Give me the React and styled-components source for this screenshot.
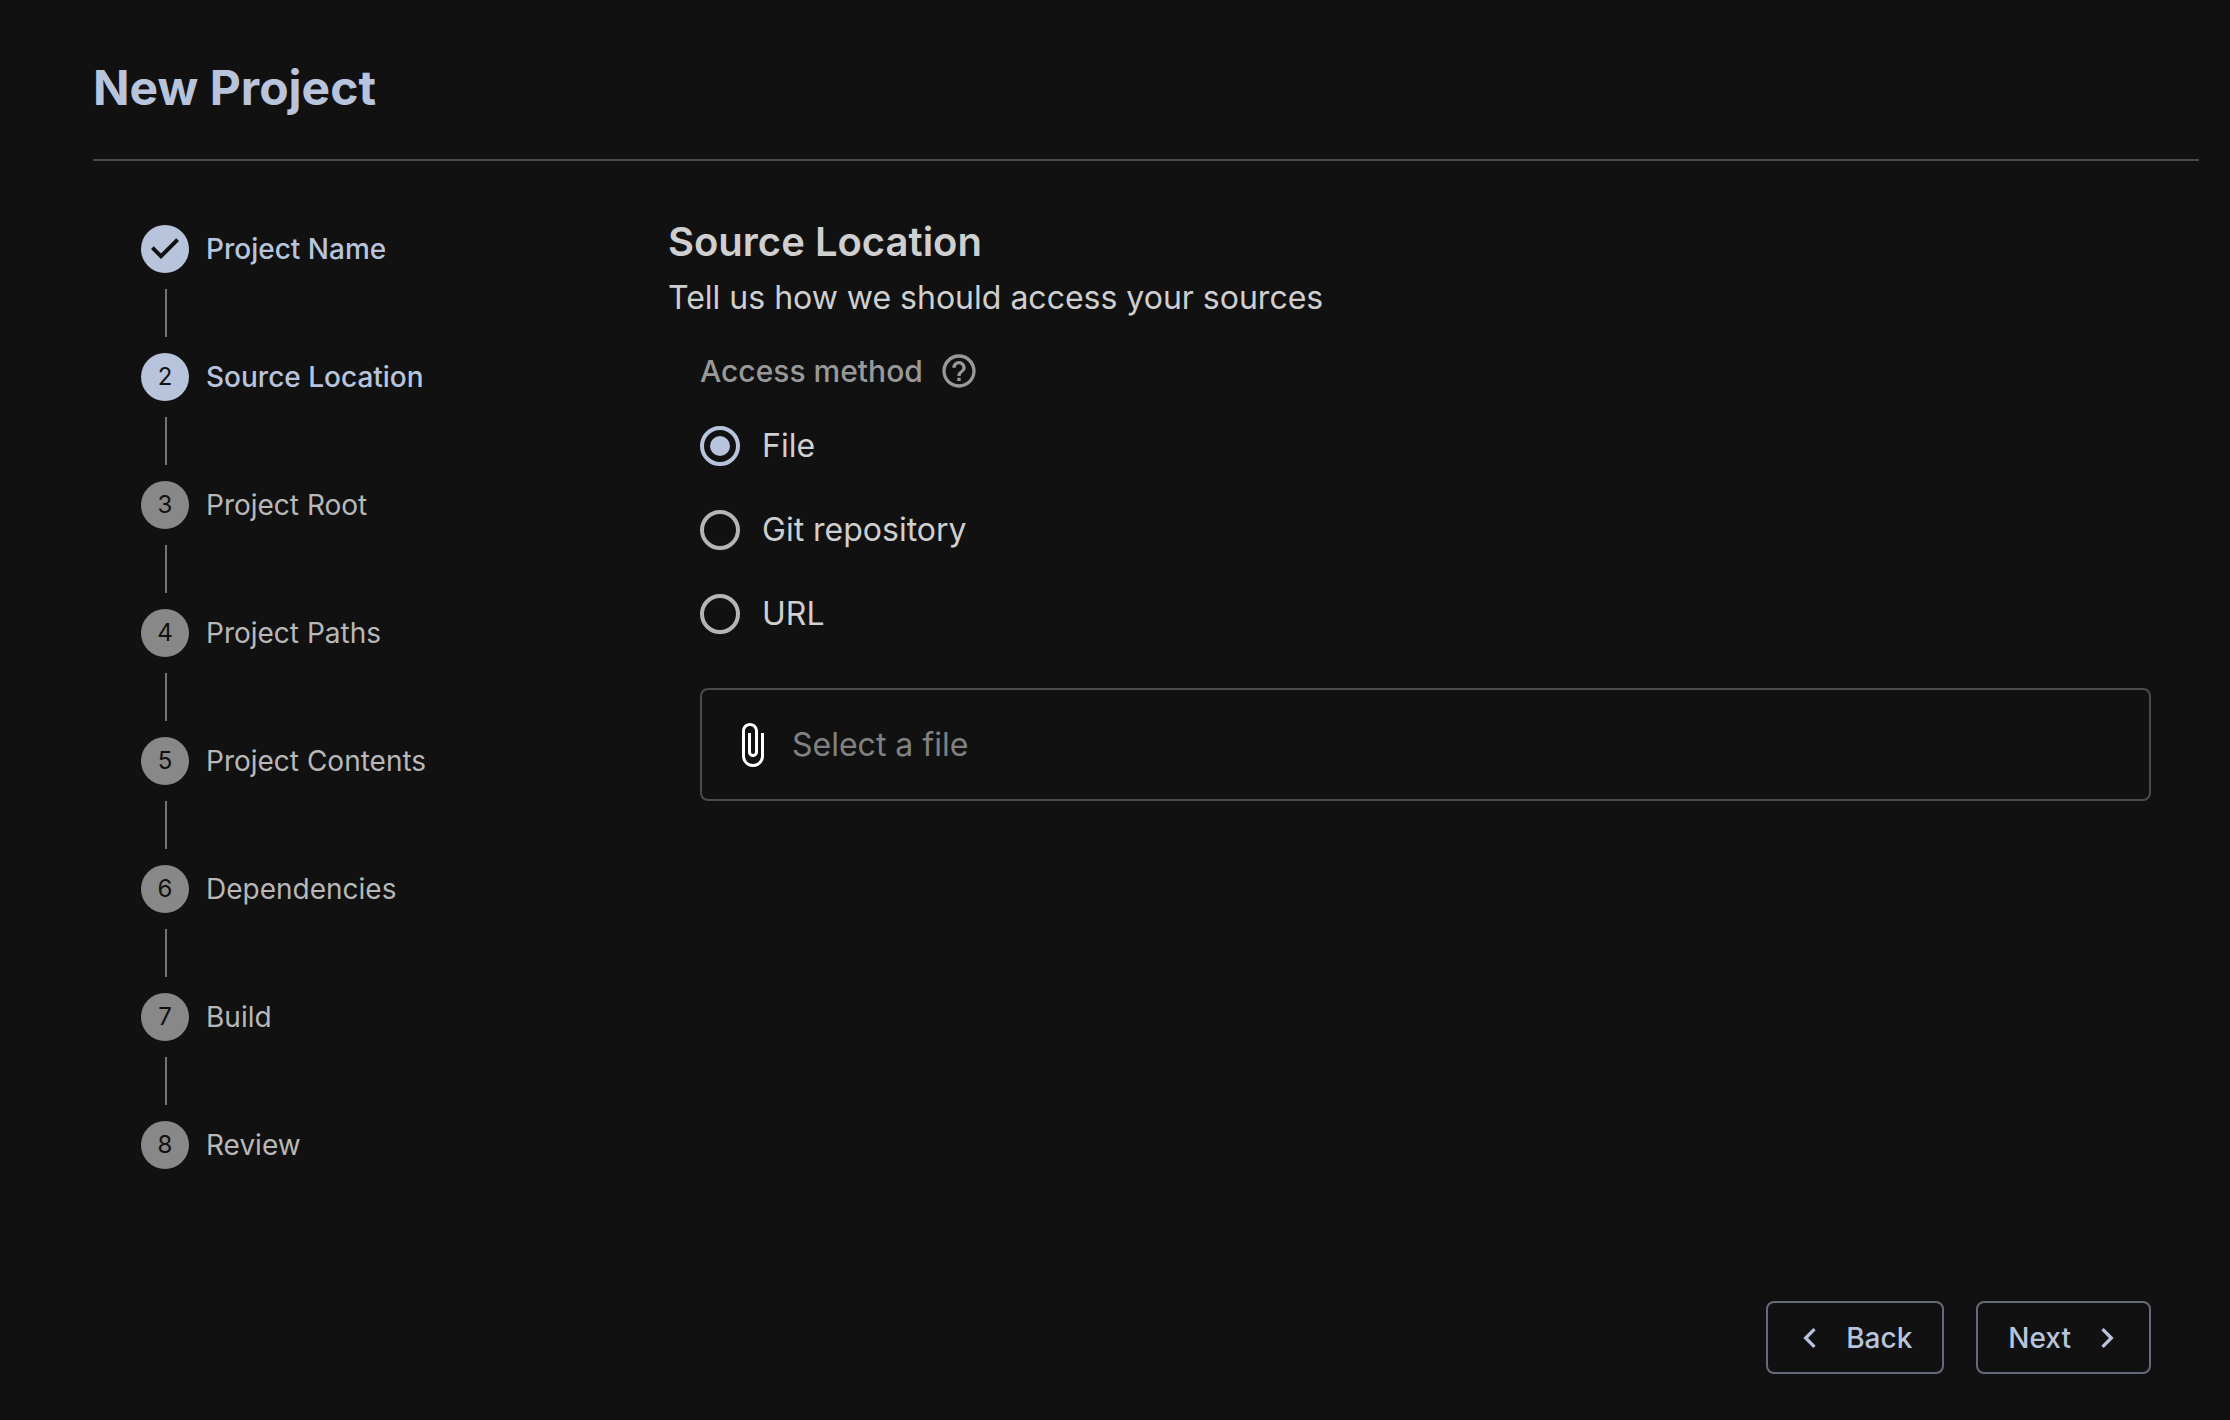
import React, { useState } from 'react';
import styled, { createGlobalStyle } from 'styled-components';

const GlobalStyle = createGlobalStyle`
  *, *::before, *::after {
    box-sizing: border-box;
  }

  body {
    margin: 0;
    background: #111;
    color: #cfcfcf;
    font-family: Inter, Roboto, sans-serif;
    font-size: 32px;
    line-height: 48px;
  }
`;

const Page = styled.div`
  display: flex;
  flex-direction: column;
  min-height: 100vh;
`;

const Header = styled.header`
  margin: 0 31px 0 93px;
  padding: 56px 0 39px;
  border-bottom: 2px solid #4a4a4a;
`;

const Title = styled.h1`
  margin: 0;
  font-size: 48px;
  font-weight: 700;
  line-height: 64px;
  color: #b7c4dc;
`;

const Body = styled.div`
  display: flex;
  flex: 1;
`;

const Sidebar = styled.nav`
  width: 620px;
  flex-shrink: 0;
  margin: 16px 0;
  padding: 48px 32px 0 141px;
  border-right: 2px solid #0f0f0f;
`;

const Steps = styled.ol`
  display: flex;
  flex-direction: column;
  gap: 16px;
  margin: 0;
  padding: 0;
  list-style: none;
`;

const Step = styled.li`
  display: flex;
  align-items: center;
  gap: 17px;
  height: 48px;
  font-size: 28px;
  font-weight: ${props => (props.$reached ? 500 : 400)};
  color: ${props => (props.$reached ? '#b7c4dc' : '#b8b8b8')};
`;

const StepBadge = styled.span`
  display: flex;
  align-items: center;
  justify-content: center;
  width: 48px;
  height: 48px;
  border-radius: 50%;
  background: ${props => (props.$reached ? '#b7c4dc' : '#888')};
  color: #111;
  font-size: 24px;
  font-weight: 400;
`;

const Connector = styled.li`
  width: 2px;
  height: 48px;
  margin-left: 24px;
  background: #757575;
`;

const Main = styled.main`
  display: flex;
  flex: 1;
  flex-direction: column;
  padding: 53px 79px 46px 48px;
`;

const SectionTitle = styled.h2`
  margin: 0;
  font-size: 40px;
  font-weight: 600;
  line-height: 56px;
`;

const Subtitle = styled.p`
  margin: 4px 0 0;
`;

const Form = styled.form`
  display: flex;
  flex-direction: column;
  padding: 25px 0 0 32px;
`;

const RadioGroup = styled.fieldset`
  display: flex;
  flex-direction: column;
  margin: 0;
  padding: 0;
  border: 0;
`;

const Legend = styled.legend`
  display: flex;
  align-items: center;
  gap: 16px;
  margin-bottom: 9px;
  padding: 0;
  color: #999;
  font-size: 30px;
  font-weight: 500;
`;

const RadioLabel = styled.label`
  display: flex;
  align-items: center;
  gap: 22px;
  height: 84px;
`;

const Radio = styled.input.attrs({ type: 'radio' })`
  appearance: none;
  display: grid;
  place-content: center;
  width: 40px;
  height: 40px;
  margin: 0;
  border: 4px solid #b5b5b5;
  border-radius: 50%;

  &:checked {
    border-color: #b7c4dc;
  }

  &:checked::before {
    content: '';
    width: 20px;
    height: 20px;
    border-radius: 50%;
    background: #b7c4dc;
  }
`;

const FileField = styled.label`
  display: flex;
  align-items: center;
  gap: 16px;
  height: 113px;
  margin-top: 32px;
  padding: 0 26px;
  border: 2px solid #4a4a4a;
  border-radius: 8px;
`;

const FileInput = styled.input`
  flex: 1;
  min-width: 0;
  padding: 0;
  border: 0;
  outline: 0;
  background: transparent;
  color: inherit;
  font: inherit;

  &::placeholder {
    color: #818181;
    opacity: 1;
  }
`;

const Actions = styled.footer`
  display: flex;
  justify-content: flex-end;
  gap: 32px;
  margin-top: auto;
`;

const Button = styled.button`
  display: flex;
  align-items: center;
  gap: 16px;
  height: 73px;
  padding: 0 ${props => (props.$iconFirst ? '30px 0 22px' : '22px 0 30px')};
  border: 2px solid #656c79;
  border-radius: 8px;
  background: transparent;
  color: #b7c4dc;
  font: inherit;
  font-size: 28px;
  font-weight: 500;
`;

const Icon = ({ path, size, color = 'currentColor' }) => (
  <svg width={size} height={size} viewBox="0 0 24 24" fill={color} aria-hidden="true">
    <path d={path} />
  </svg>
);

const icons = {
  check: 'M10 17l-5-5 1.4-1.4 3.6 3.6 7.6-7.6L19 8z',
  help: 'M11 18h2v-2h-2v2zm1-16C6.48 2 2 6.48 2 12s4.48 10 10 10 10-4.48 10-10S17.52 2 12 2zm0 18c-4.41 0-8-3.59-8-8s3.59-8 8-8 8 3.59 8 8-3.59 8-8 8zm0-14c-2.21 0-4 1.79-4 4h2c0-1.1.9-2 2-2s2 .9 2 2c0 2-3 1.75-3 5h2c0-2.25 3-2.5 3-5 0-2.21-1.79-4-4-4z',
  clip: 'M16.5 6v11.5c0 2.21-1.79 4-4 4s-4-1.79-4-4V5c0-1.38 1.12-2.5 2.5-2.5s2.5 1.12 2.5 2.5v10.5c0 .55-.45 1-1 1s-1-.45-1-1V6H10v9.5c0 1.38 1.12 2.5 2.5 2.5s2.5-1.12 2.5-2.5V5c0-2.21-1.79-4-4-4S7 2.79 7 5v12.5c0 3.04 2.46 5.5 5.5 5.5s5.5-2.46 5.5-5.5V6h-1.5z',
  left: 'M15.41 7.41 14 6l-6 6 6 6 1.41-1.41L10.83 12z',
  right: 'M10 6 8.59 7.41 13.17 12l-4.58 4.59L10 18l6-6z',
};

const steps = [
  'Project Name',
  'Source Location',
  'Project Root',
  'Project Paths',
  'Project Contents',
  'Dependencies',
  'Build',
  'Review',
];

const methods = ['File', 'Git repository', 'URL'];

const Stepper = ({ current }) => (
  <Steps>
    {steps.map((name, i) => (
      <React.Fragment key={name}>
        {i > 0 && <Connector aria-hidden="true" />}
        <Step $reached={i <= current} aria-current={i === current ? 'step' : undefined}>
          <StepBadge $reached={i <= current}>
            {i < current ? <Icon path={icons.check} size={48} /> : i + 1}
          </StepBadge>
          {name}
        </Step>
      </React.Fragment>
    ))}
  </Steps>
);

const App = () => {
  const [method, setMethod] = useState('File');

  return (
    <Page>
      <GlobalStyle />
      <Header>
        <Title>New Project</Title>
      </Header>
      <Body>
        <Sidebar>
          <Stepper current={1} />
        </Sidebar>
        <Main>
          <SectionTitle>Source Location</SectionTitle>
          <Subtitle>Tell us how we should access your sources</Subtitle>
          <Form id="source">
            <RadioGroup>
              <Legend>
                Access method
                <Icon path={icons.help} size={40} />
              </Legend>
              {methods.map(name => (
                <RadioLabel key={name}>
                  <Radio name="method" checked={method === name} onChange={() => setMethod(name)} />
                  {name}
                </RadioLabel>
              ))}
            </RadioGroup>
            <FileField>
              <Icon path={icons.clip} size={48} color="#fff" />
              <FileInput placeholder="Select a file" aria-label="Select a file" readOnly />
            </FileField>
          </Form>
          <Actions>
            <Button type="button" $iconFirst>
              <Icon path={icons.left} size={40} />
              Back
            </Button>
            <Button type="submit" form="source">
              Next
              <Icon path={icons.right} size={40} />
            </Button>
          </Actions>
        </Main>
      </Body>
    </Page>
  );
};

export default App;
